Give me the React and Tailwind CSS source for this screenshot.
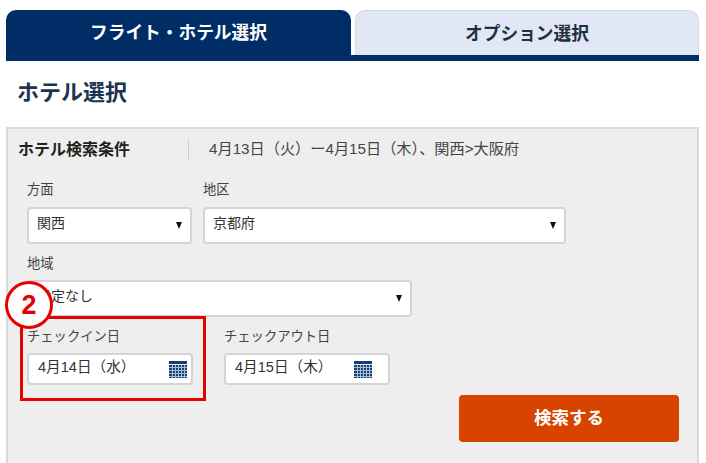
import React from 'react';

const FONT = "font-['Liberation_Sans','Noto_Sans_CJK_JP',sans-serif]";

const Select = ({ value, className }) => (
  <div className={`h-[37px] bg-white border-2 border-[#d4d4d4] rounded-[4px] flex items-center justify-between pl-[8px] pr-[8px] text-[14px] text-[#333] ${className}`}>
    <span className="pb-[4px]">{value}</span>
    <span className="w-0 h-0 border-x-[3.5px] border-x-transparent border-t-[7px] border-t-[#111]" />
  </div>
);

const CalendarIcon = () => (
  <svg width="18" height="17" viewBox="0 0 18 17" className="shrink-0">
    <rect x="0" y="0" width="18" height="17" fill="#143f75" />
    <rect x="0" y="3" width="18" height="1" fill="#e8eef5" />
    {[6, 9, 12, 15].map((y) => (
      <rect key={y} x="0" y={y} width="18" height="1" fill="#a9bdd3" />
    ))}
    {[3, 6, 9, 12, 15].map((x) => (
      <rect key={x} x={x} y="4" width="1" height="13" fill="#a9bdd3" />
    ))}
  </svg>
);

const DateInput = ({ value, iconGap }) => (
  <div className={`w-[166px] h-[32px] bg-white border-2 border-[#d4d4d4] rounded-[4px] flex items-center justify-between pl-[9px] text-[14.6px] text-[#333] ${iconGap}`}>
    <span className="pb-[2px]">{value}</span>
    <CalendarIcon />
  </div>
);

const Label = ({ children, className }) => (
  <div className={`text-[13.3px] leading-[16px] text-[#444] ${className}`}>{children}</div>
);

export default function App() {
  return (
    <div className={`relative w-[706px] h-[463px] overflow-hidden bg-white ${FONT}`}>
      <div className="px-[6px] pr-[7px] pt-[10px]">
        <div className="flex gap-[4px] border-b-[6px] border-[#002d66] h-[51px]">
          <div className="w-[345px] bg-[#002d66] rounded-t-[10px] flex items-center justify-center pt-[2px] text-white font-bold text-[17.7px]">
            フライト・ホテル選択
          </div>
          <div className="flex-1 bg-[#e1e7f5] border border-b-0 border-[#d3d9e6] rounded-t-[10px] flex items-center justify-center pt-[2px] text-[#222f3e] font-bold text-[17.7px]">
            オプション選択
          </div>
        </div>

        <h1 className="mt-[19px] ml-[11px] text-[22px] leading-[26px] font-bold text-[#1e3350]">ホテル選択</h1>

        <div className="mt-[21px] h-[340px] bg-[#eeeeee] border-2 border-[#dadada] border-b-0">
          <div className="h-[41px] flex items-center pl-[10px]">
            <div className="w-[171px] font-bold text-[16px] text-[#222] border-r border-[#cfcfcf] h-[20px] leading-[20px]">ホテル検索条件</div>
            <div className="pl-[20px] text-[15.2px] text-[#444]">4月13日（火）ー4月15日（木）、関西&gt;大阪府</div>
          </div>

          <div className="pl-[19px] pr-[18px] pt-[12px]">
            <div className="flex gap-[11px]">
              <div>
                <Label className="mb-[9px]">方面</Label>
                <Select value="関西" className="w-[165px]" />
              </div>
              <div>
                <Label className="mb-[9px]">地区</Label>
                <Select value="京都府" className="w-[363px]" />
              </div>
            </div>

            <div className="mt-[12px]">
              <Label className="mb-[8px]">地域</Label>
              <Select value="指定なし" className="w-[385px]" />
            </div>

            <div className="mt-[12px] flex gap-[31px]">
              <div>
                <Label className="mb-[8px]">チェックイン日</Label>
                <DateInput value="4月14日（水）" iconGap="pr-[4px]" />
              </div>
              <div>
                <Label className="mb-[8px]">チェックアウト日</Label>
                <DateInput value="4月15日（木）" iconGap="pr-[16px]" />
              </div>
            </div>

            <div className="flex justify-end mt-[10px]">
              <button className="w-[220px] h-[47px] bg-[#d84400] rounded-[4px] text-white font-bold text-[17.5px]">検索する</button>
            </div>
          </div>
        </div>
      </div>

      {/* annotation overlay */}
      <div className="absolute left-[20px] top-[316px] w-[186px] h-[85px] border-[3px] border-[#e60000]" />
      <div className="absolute left-[5px] top-[281px] w-[48px] h-[48px] rounded-full bg-white border-[3px] border-[#e60000] flex items-center justify-center text-[#e60000] font-bold text-[27px]">
        2
      </div>
    </div>
  );
}
